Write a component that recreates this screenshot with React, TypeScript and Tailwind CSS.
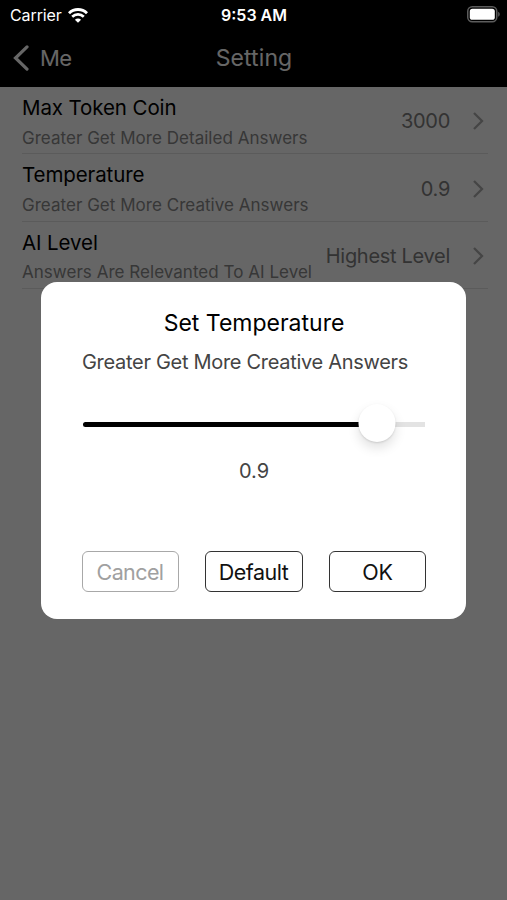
import { useState } from "react";

interface SettingItem {
  title: string;
  hint: string;
  value: string;
}

const settings: SettingItem[] = [
  { title: "Max Token Coin", hint: "Greater Get More Detailed Answers", value: "3000" },
  { title: "Temperature", hint: "Greater Get More Creative Answers", value: "0.9" },
  { title: "AI Level", hint: "Answers Are Relevanted To AI Level", value: "Highest Level" },
];

const DEFAULT_TEMPERATURE = 0.9;

function StatusBar() {
  return (
    <div className="relative z-20 grid h-[30px] grid-cols-3 items-center pl-[10px] pr-[7px] text-white">
      <div className="flex items-center gap-[6px]">
        <span className="text-[16px] leading-[30px] tracking-[-0.1px]">Carrier</span>
        <svg width="20" height="15" viewBox="0 0 20 15" fill="none" stroke="currentColor" aria-hidden="true">
          <path d="M1 5.2C6 0.3 14 0.3 19 5.2" strokeWidth="2.9" />
          <path d="M4.2 8.7C7.5 5.5 12.5 5.5 15.8 8.7" strokeWidth="2.7" />
          <path d="M10 14.8L6.9 11.7C8.6 10 11.4 10 13.1 11.7Z" fill="currentColor" stroke="none" />
        </svg>
      </div>
      <span className="pr-[2px] text-center text-[16px] font-semibold leading-[30px]">9:53 AM</span>
      <svg className="-mt-[2px] justify-self-end" width="33" height="17" viewBox="0 0 33 17" aria-hidden="true">
        <rect x="0.75" y="0.75" width="29" height="15" rx="4.5" fill="none" stroke="#5c5c5c" strokeWidth="1.5" />
        <rect x="2.8" y="2.8" width="25" height="11" rx="2.6" fill="#fff" />
        <path d="M31.2 5.8V10.8C33.2 9.8 33.2 6.8 31.2 5.8Z" fill="#5c5c5c" />
      </svg>
    </div>
  );
}

function NavBar() {
  return (
    <header className="grid h-[57px] grid-cols-3 items-center text-[23px] text-white">
      <button className="flex items-center gap-[11px] pl-[13px]">
        <svg className="-mt-[2px]" width="16" height="26" viewBox="0 0 16 26" fill="none" stroke="currentColor" strokeWidth="3.2" aria-hidden="true">
          <path d="M14 1.9L2.5 13L14 24.1" strokeLinecap="round" />
        </svg>
        <span className="text-[22px] tracking-[-0.6px]">Me</span>
      </button>
      <h1 className="pl-[1px] text-center tracking-[0.1px]">Setting</h1>
    </header>
  );
}

function SettingRow({ title, hint, value }: SettingItem) {
  return (
    <li className="flex h-[67.4px] justify-between border-b border-[#e4e4e4]">
      <div className="pt-[7px] whitespace-nowrap">
        <p className="text-[20.5px] leading-[28px] tracking-[-0.1px] text-black">{title}</p>
        <p className="pt-[3.5px] text-[17px] leading-[24px] tracking-[0.03px] text-[#8a8a8a]">{hint}</p>
      </div>
      <div className="flex items-center gap-[23px] pr-[4px] pt-[2px] text-[20px] text-[#808080]">
        <span className="tracking-[-0.3px] whitespace-nowrap">{value}</span>
        <svg width="11" height="18" viewBox="0 0 11 18" fill="none" stroke="#adadad" strokeWidth="2.3" aria-hidden="true">
          <path d="M1 1L9 9L1 17" />
        </svg>
      </div>
    </li>
  );
}

function TemperatureDialog() {
  const [temperature, setTemperature] = useState(DEFAULT_TEMPERATURE);
  const position = `${(temperature * 321) / 341 * 100 + 1.3}%`;

  return (
    <div role="dialog" className="flex h-[337px] w-[425px] flex-col items-center rounded-[16px] bg-white pl-[41px] pr-[40px]">
      <h2 className="mt-[26px] text-[23px] leading-[30px] text-black whitespace-nowrap">Set Temperature</h2>
      <p className="mt-[11px] self-start text-[20px] leading-[26px] tracking-[-0.3px] text-[#444] whitespace-nowrap">
        Greater Get More Creative Answers
      </p>

      {/* Slider */}
      <div className="relative mt-[47px] h-[5px] w-[342px] rounded-l-full bg-[#e3e3e3]">
        <div className="h-full rounded-l-full bg-black" style={{ width: position }} />
        <div
          className="absolute top-[-18px] h-[38px] w-[37px] -translate-x-1/2 rounded-full bg-white shadow-[0_6px_12px_rgba(0,0,0,0.12),0_1px_2px_rgba(0,0,0,0.12)]"
          style={{ left: position }}
        />
      </div>
      <p className="mt-[31px] text-[20px] leading-[26px] text-[#444]">{temperature}</p>

      {/* Actions */}
      <div className="mt-[67px] flex w-full justify-between text-[21.5px] text-[#111]">
        <button className="h-[41px] w-[97px] rounded-[6px] border-[1.5px] border-[#a8a8a8] pt-[2px] pr-[1px] tracking-[-0.6px] text-[#a0a0a0]">
          Cancel
        </button>
        <button
          className="h-[41px] w-[98px] rounded-[6px] border-[1.5px] border-[#333] pt-[2px] pr-[1px] tracking-[-0.5px]"
          onClick={() => setTemperature(DEFAULT_TEMPERATURE)}
        >
          Default
        </button>
        <button className="h-[41px] w-[97px] rounded-[6px] border-[1.5px] border-[#333] pt-[2px] tracking-[-0.3px]">OK</button>
      </div>
    </div>
  );
}

export default function App() {
  return (
    <div className="relative h-screen overflow-hidden bg-white font-['Inter',sans-serif]">
      <div className="bg-black">
        <StatusBar />
        <NavBar />
      </div>
      <ul className="pl-[22px] pr-[19px]">
        {settings.map((item) => (
          <SettingRow key={item.title} {...item} />
        ))}
      </ul>

      <div className="absolute inset-0 z-10 flex items-center justify-center bg-black/60">
        <TemperatureDialog />
      </div>
    </div>
  );
}
